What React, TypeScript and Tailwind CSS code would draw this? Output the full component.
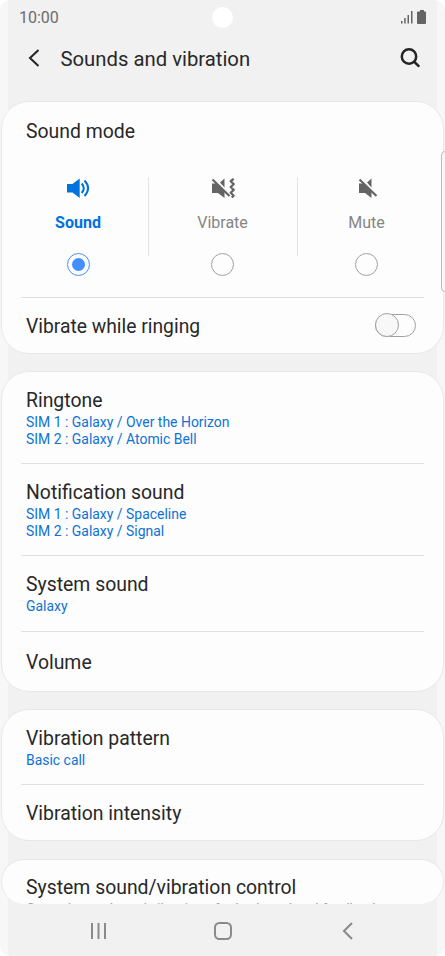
import type { ReactNode } from 'react';

function SoundIcon() {
  return (
    <svg width="24" height="20" viewBox="0 0 24 20" fill="none" stroke="#0072de" strokeWidth="2">
      <path d="M1 6h5.500L13.700 .5v19.500L6.500 14.500H1z" fill="#0072de" stroke="none" />
      <path d="M15.700 5.500q4.200 4.700 0 9.500M18.500 2.500q7.200 7.700 0 15.500" />
    </svg>
  );
}

function MutedSpeaker({ vibrate = false }: { vibrate?: boolean }) {
  return (
    <svg width="24" height="20" viewBox="0 0 24 20" fill="none" stroke="#646464">
      <g transform={vibrate ? 'translate(-3 0)' : undefined}>
        <path d="M4 5.500h5L16.500 13v7L10 15H4zM12 4.500L16.500 .5v9z" fill="#646464" stroke="none" />
        <path d="M6 1l16.500 16.500" stroke="#fdfdfd" strokeWidth="1" />
        <path d="M4.500 1.500l17 16.500" strokeWidth="2.200" />
      </g>
      {vibrate && <path d="M22.700 .8l-3 2.400 3 2.900-3 2.900 3 2.900-3 2.900 3 2.900-2 1.800" strokeWidth="2.200" strokeLinejoin="round" />}
    </svg>
  );
}

function Mode({ label, icon, width, selected = false }: { label: string; icon: ReactNode; width: string; selected?: boolean }) {
  return (
    <div className={`flex flex-col items-center ${width}`}>
      {icon}
      <div className={`mt-[14px] h-5 pt-[0.5px] text-[16px] leading-5 ${selected ? 'font-bold text-[#0072de]' : 'text-[#858585]'}`}>{label}</div>
      <div className={`mt-[21px] flex size-[23px] items-center justify-center rounded-full border ${selected ? 'border-[#438ff5]' : 'border-[#a0a0a0]'}`}>
        {selected && <div className="size-[13px] rounded-full bg-[#438fff]" />}
      </div>
    </div>
  );
}

function Row({ title, lines = [], className, lineStyle = 'text-[#0d72d5]' }: { title: string; lines?: string[]; className: string; lineStyle?: string }) {
  return (
    <div className={`mx-[19px] px-[5px] ${className}`}>
      <div className="mb-px whitespace-nowrap text-[19.4px] leading-6 text-[#282828]">{title}</div>
      {lines.map((line) => (
        <div key={line} className={`whitespace-nowrap text-[13.95px] leading-[16.5px] ${lineStyle}`}>{line}</div>
      ))}
    </div>
  );
}

const card = 'mx-px box-border shrink-0 overflow-hidden border border-[#e8e8e8] bg-[#fdfdfd]';
const divider = 'border-b border-[#e0e0e0]';

export default function App() {
  return (
    <div className="h-[956px] w-[445px] overflow-hidden bg-white font-[Roboto,sans-serif]">
      <div className="relative flex h-[956px] flex-col overflow-hidden rounded-[10px] bg-[linear-gradient(90deg,#f7f7f7_0_8px,#f1f1f1_8px_437px,#f7f7f7_437px)]">
        <header className="h-[101px] shrink-0">
          <div className="flex h-[34px] items-center pl-[19px]">
            <span className="w-[60px] pt-px text-[16px] text-[#6c6c6c]">10:00</span>
            <span className="ml-[133px] size-[21px] rounded-full bg-white" />
            <svg className="ml-[168px]" width="27" height="14" viewBox="0 0 27 14" fill="#646464">
              <path d="M0 11h1.500v2.500H0zM3.200 8h1.500v5.500H3.200zM6.500 5h1.500v8.500H6.500zM10 1h1.500v12.500H10z" />
              <path d="M19 0h4v1.500h1a1 1 0 0 1 1 1V13a1 1 0 0 1-1 1h-7a1 1 0 0 1-1-1V2.500a1 1 0 0 1 1-1h2z" />
            </svg>
          </div>
          <div className="flex h-12 items-center pl-[28px] pr-[25px]">
            <svg width="12" height="18" viewBox="0 0 12 18" fill="none" stroke="#252525" strokeWidth="2"><path d="M10.500 1L2 9l8.500 8" /></svg>
            <h1 className="ml-[20.5px] flex-1 pt-[2px] text-[20.3px] leading-6 text-[#282828]">Sounds and vibration</h1>
            <svg width="20" height="20" viewBox="0 0 20 20" fill="none" stroke="#252525" strokeWidth="2.500"><circle cx="9" cy="8.500" r="7.200" /><path d="M14 13.500l5.200 5.200" /></svg>
          </div>
        </header>
        <main className="flex h-[803px] shrink-0 flex-col gap-[18px] overflow-hidden">
          <section className={`${card} -mb-px h-[253px] rounded-[28px]`}>
            <h2 className="ml-[24px] mt-[18px] text-[19.4px] leading-6 text-[#282828]">Sound mode</h2>
            <div className="ml-[6px] mt-[33px] flex h-[120px] w-[434px]">
              <Mode label="Sound" icon={<SoundIcon />} width="w-[140px] pt-px" selected />
              <div className="h-[79px] w-px bg-[#e3e3e3]" />
              <Mode label="Vibrate" icon={<MutedSpeaker vibrate />} width="mr-px w-[147px] pt-px" />
              <div className="h-[79px] w-px bg-[#e3e3e3]" />
              <Mode label="Mute" icon={<MutedSpeaker />} width="w-[137px] pt-px" />
            </div>
            <div className="mx-[19px] flex h-[55px] items-center justify-between border-t border-[#e0e0e0] pl-[5px] pr-[8px]">
              <span className="pt-[3px] text-[19.3px] leading-6 text-[#282828]">Vibrate while ringing</span>
              <div className="h-[23px] w-[41px] rounded-full border border-[#a0a0a0]"><div className="-ml-px -mt-[1.5px] size-[24px] rounded-full border border-[#a0a0a0] bg-[#f8f8f8]" /></div>
            </div>
          </section>
          <section className={`${card} -mb-px h-[321px] rounded-[28px]`}>
            <Row title="Ringtone" lines={['SIM 1 : Galaxy / Over the Horizon', 'SIM 2 : Galaxy / Atomic Bell']} className={`${divider} h-[92px] pt-[17px]`} />
            <Row title="Notification sound" lines={['SIM 1 : Galaxy / Spaceline', 'SIM 2 : Galaxy / Signal']} className={`${divider} h-[92px] pt-[17px]`} />
            <Row title="System sound" lines={['Galaxy']} className={`${divider} h-[76px] pt-[17px]`} />
            <Row title="Volume" className="pt-[19px]" />
          </section>
          <section className={`${card} h-[132px] rounded-[28px]`}>
            <Row title="Vibration pattern" lines={['Basic call']} className={`${divider} h-[75px] pt-[17px]`} />
            <Row title="Vibration intensity" className="pt-[17px]" />
          </section>
          <section className={`${card} h-[45px] rounded-[23px] border-b-0`}>
            <Row title="System sound/vibration control" lines={['Control sounds and vibrations for keyboard and feedback']} lineStyle="text-[#a0a0a0]" className="pt-[16px]" />
          </section>
        </main>
        <nav className="flex h-[52px] shrink-0 items-center pl-[90px] pt-[2px]">
          <svg width="17" height="18" viewBox="0 0 17 18" stroke="#8a8a8a" strokeWidth="2"><path d="M2 1v16M8.500 1v16M15 1v16" /></svg>
          <svg className="ml-[107px]" width="18" height="18" viewBox="0 0 18 18" fill="none" stroke="#8a8a8a" strokeWidth="2"><rect x="1" y="1" width="16" height="16" rx="4.500" /></svg>
          <svg className="ml-[110px]" width="11" height="18" viewBox="0 0 11 18" fill="none" stroke="#8a8a8a" strokeWidth="2"><path d="M10 1L2 9l8 8" /></svg>
        </nav>
        <div className="absolute right-[-4px] top-[151px] h-[141px] w-[8px] rounded-[5px] border border-[#bdbdbd] bg-[#f8f8f8]" />
      </div>
    </div>
  );
}
